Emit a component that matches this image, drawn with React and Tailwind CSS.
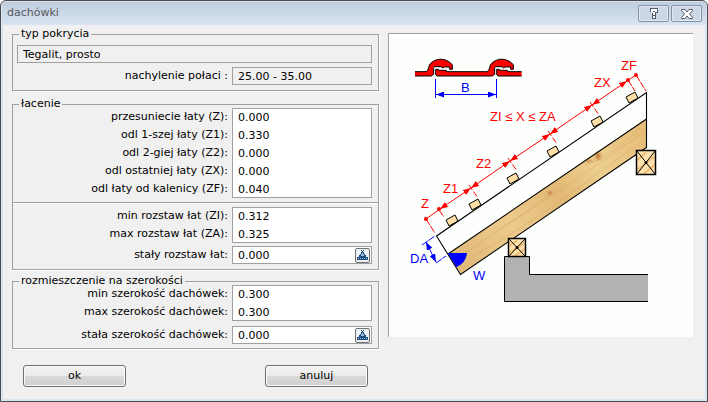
import React, { useState } from 'react';

const BATTENS = [
  { x: 452, y: 221 },
  { x: 475, y: 205 },
  { x: 513, y: 179 },
  { x: 553, y: 152 },
  { x: 597, y: 122 },
  { x: 632, y: 98 },
];

// Points on the red dimension line, from the eaves to the ridge
const SPANS = [
  { from: [440, 209], to: [471, 188] },
  { from: [471, 188], to: [510, 161] },
  { from: [510, 161], to: [550, 134] },
  { from: [550, 134], to: [592, 105] },
  { from: [592, 105], to: [627, 81] },
];

const CalcIcon = () => (
  <svg width="11" height="11" viewBox="0 0 11 11" fill="none" stroke="#1f4f80" shapeRendering="crispEdges">
    <path stroke="#9dbad6" d="M5 3.5h1M4 4.5h3M4 5.5h3M3 6.5h5M1 8.5h9" />
    <path d="M4 .5h1M6 .5h1M5 1.5h1M4 2.5h3M4 3.5h1M6 3.5h1M3 4.5h1M7 4.5h1M2 5.5h2M7 5.5h2M2 6.5h7M0 7.5h11M0 8.5h1M2 8.5h1M4 8.5h1M6 8.5h1M8 8.5h1M10 8.5h1M0 9.5h11" />
  </svg>
);

const Post = ({ x, y, w, h }) => (
  <g stroke="#000">
    <rect x={x} y={y} width={w} height={h} fill="#ffe2ad" />
    <path
      d={`M${x + 1} ${y + h * 0.4}L${x + w * 0.5} ${y + 2}M${x + 1} ${y + h * 0.8}L${x + w - 1} ${y + h * 0.25}M${x + w * 0.4} ${y + h - 1}L${x + w - 1} ${y + h * 0.6}`}
      stroke="#efbd72"
      strokeWidth="2"
    />
    <path d={`M${x} ${y}l${w} ${h}M${x + w} ${y}l${-w} ${h}`} />
    <circle cx={x + w / 2} cy={y + h / 2} r="1" />
    <rect x={x} y={y} width={w} height={h} fill="none" strokeWidth="1.5" />
  </g>
);

const TileProfile = () => (
  <g transform="translate(400 30) scale(.3333)" fill="#f00" stroke="#000" strokeWidth="3" strokeLinejoin="round">
    <path stroke="none" d="M45 125H78C88 122 84 106 92 100C110 83 138 83 157 104V118H149V111H132L128 114L123 110H101V133L94 138H45Z" />
    <path fill="none" d="M45 125H78C88 122 84 106 92 100C110 83 138 83 157 104V118H149V111H132L128 114L123 110H104Q101 110 101 116V133L94 138H45" />
    <path d="M107 118H115V121H139V125H261C271 122 267 106 275 100C293 83 321 83 340 104V118H332V111H315L311 114L306 110H287Q284 110 284 116V133L277 138H111L107 134Z" />
    <path stroke="none" d="M290 118H298V121H322V125H365V138H294L290 134Z" />
    <path fill="none" d="M365 125H322V121H298V118H290V134L294 138H365" />
  </g>
);

const RoofDrawing = () => (
  <svg viewBox="389 34 304 303" className="block w-full max-w-[304px]" fontFamily="'Liberation Sans', Arial, sans-serif" fontSize="13">
    <defs>
      <linearGradient id="wood" gradientUnits="userSpaceOnUse" x1="455" y1="265" x2="646" y2="135">
        <stop offset="0" stopColor="#e0b878" />
        <stop offset=".3" stopColor="#ecca8c" />
        <stop offset=".55" stopColor="#e2b975" />
        <stop offset=".75" stopColor="#edcf90" />
        <stop offset="1" stopColor="#e6bd79" />
      </linearGradient>
      <radialGradient id="knot">
        <stop offset="0" stopColor="#b5682a" />
        <stop offset="1" stopColor="#d79c50" stopOpacity="0" />
      </radialGradient>
      <marker id="redArrow" viewBox="0 0 8 6" refX="8" refY="3" markerWidth="8" markerHeight="6" markerUnits="userSpaceOnUse" orient="auto-start-reverse">
        <path d="M0 0L8 3L0 6Z" fill="#f00" />
      </marker>
      <marker id="blueArrow" viewBox="0 0 8 6" refX="8" refY="3" markerWidth="8" markerHeight="6" markerUnits="userSpaceOnUse" orient="auto-start-reverse">
        <path d="M0 0L8 3L0 6Z" fill="#00f" />
      </marker>
    </defs>

    <TileProfile />

    {/* tile width */}
    <g fill="none" stroke="#00f">
      <path d="M435.500 79V98M496.500 79V98" />
      <path d="M436 94.500H496" markerStart="url(#blueArrow)" markerEnd="url(#blueArrow)" />
    </g>

    {/* rafter */}
    <path d="M448 254L646 119V148L460.500 274Z" fill="url(#wood)" />
    <g fill="none" stroke="#cf9f58" strokeOpacity=".4">
      <path d="M455 260L540 203Q580 178 646 130" />
      <path d="M470 258Q530 224 570 194T644 140" />
      <path d="M500 228Q530 212 552 191" />
      <path d="M585 165Q610 158 640 128" />
    </g>
    <ellipse cx="598" cy="156" rx="5" ry="6" fill="url(#knot)" />
    <ellipse cx="589" cy="161" rx="6" ry="3" fill="url(#knot)" opacity=".6" />
    <ellipse cx="550" cy="193" rx="4" ry="4" fill="url(#knot)" opacity=".7" />
    <path d="M646.500 148V92.500L436.500 236L460.500 274.500L646.500 147.500M448 254L646.500 119" fill="none" stroke="#000" strokeWidth="1.1" />

    {BATTENS.map(({ x, y }) => (
      <path
        key={x}
        d={`M${x - 6} ${y - 1}L${x + 3} ${y - 6}L${x + 6} ${y}L${x - 3} ${y + 5}Z`}
        fill="#ffdfa5"
        stroke="#000"
      />
    ))}

    {/* wall */}
    <path d="M648 274.500H529.500V256.500H504.500V301.500H648" fill="#b2b2b2" stroke="#000" />
    <Post x={508.5} y={238.5} w={17} h={18} />
    <Post x={636.5} y={150.5} w={19} h={24} />

    {/* batten spacing */}
    <g fill="none" stroke="#f00">
      <path d="M426 219L440 209M627 81L636 75" />
      <path d="M426 219L435 233M439 210L444 217M636 75L646 91M628 80L635 91" strokeDasharray="7 1" />
      {SPANS.map(({ from, to }) => (
        <path
          key={from[0]}
          d={`M${from[0]} ${from[1]}L${to[0]} ${to[1]}`}
          markerStart="url(#redArrow)"
          markerEnd="url(#redArrow)"
        />
      ))}
      {SPANS.slice(1).map(({ from }) => (
        <path key={from[0]} d={`M${from[0] - 2} ${from[1] - 3}l9 13`} strokeDasharray="6 2" />
      ))}
    </g>
    <g fill="#f00">
      <circle cx="426" cy="219" r="2" />
      <circle cx="439" cy="209" r="2" />
      <circle cx="628" cy="80" r="2" />
      <circle cx="636" cy="75" r="2" />
      <text x="421" y="208">Z</text>
      <text x="443" y="193">Z1</text>
      <text x="476" y="168">Z2</text>
      <text x="490" y="121">ZI ≤ X ≤ ZA</text>
      <text x="594" y="87">ZX</text>
      <text x="621" y="70">ZF</text>
    </g>

    {/* eaves offset and angle */}
    <g fill="none" stroke="#00f">
      <path d="M422 245L435 236M436 263L446 256" strokeDasharray="7 1" />
      <path d="M426 242L436 262" markerStart="url(#blueArrow)" markerEnd="url(#blueArrow)" />
    </g>
    <g fill="#00f">
      <path d="M447.500 253H467Q466 263 456.500 267Z" />
      <text x="461" y="92">B</text>
      <text x="410" y="263">DA</text>
      <text x="473" y="280">W</text>
    </g>
  </svg>
);

const Group = ({ title, className, children }) => (
  <fieldset className={`min-w-0 border border-[#a0a0a0] shadow-[1px_1px_0_#fff] ${className}`}>
    <legend className="ml-1.5 h-2 px-0.5 leading-2 whitespace-nowrap">{title}</legend>
    {children}
  </fieldset>
);

// Labels on the left, one shared frame around the values on the right
const FieldRows = ({ fields, values, onChange, onCalc, readOnly }) => (
  <div className="flex gap-1 pr-1.5">
    <div className="flex min-w-0 flex-1 flex-col text-right">
      {fields.map((field) => (
        <label key={field.id} htmlFor={field.id} className="h-[18px] leading-[18px] whitespace-nowrap">
          {field.label}
        </label>
      ))}
    </div>
    <div className={`relative w-[140px] inset-ring inset-ring-[#a0a0a0] ${readOnly ? '' : 'bg-white'}`}>
      {fields.map((field) => (
        <input
          key={field.id}
          id={field.id}
          type="text"
          readOnly={readOnly}
          value={values[field.id]}
          onChange={(e) => onChange(field.id, e.target.value)}
          className="block h-[18px] w-full bg-transparent px-1.5 outline-none"
        />
      ))}
      {onCalc && (
        <button
          type="button"
          aria-label="oblicz"
          onClick={() => onCalc(fields[0].id)}
          className="absolute top-0.5 right-0.5 flex h-[15px] w-[15px] items-center justify-center rounded-xs border border-[#707070] bg-[#eef1f4]"
        >
          <CalcIcon />
        </button>
      )}
    </div>
  </div>
);

const DialogButton = ({ children, onClick }) => (
  <button
    type="button"
    onClick={onClick}
    className="h-[22px] w-[103px] rounded-[3px] border border-[#707070] bg-[linear-gradient(#f2f2f2,#ebebeb_50%,#dadada_50%,#cfcfcf)] inset-ring inset-ring-[#fafafa]"
  >
    {children}
  </button>
);

const App = () => {
  const [values, setValues] = useState({
    type: 'Tegalit, prosto',
    slope: '25.00 - 35.00',
    z: '0.000',
    z1: '0.330',
    z2: '0.000',
    zx: '0.000',
    zf: '0.040',
    zi: '0.312',
    za: '0.325',
    fixedSpacing: '0.000',
    minWidth: '0.300',
    maxWidth: '0.300',
    fixedWidth: '0.000',
  });

  const handleChange = (id, value) => {
    setValues((prev) => ({ ...prev, [id]: value }));
  };

  const handleCalc = (id) => {
    handleChange(id, '0.000');
  };

  return (
    <div className="bg-white">
      <div className="flex min-h-screen flex-col rounded-t-md border border-[#4a4a4f] bg-[#d9e4f1] p-px font-['DejaVu_Sans',Verdana,sans-serif] text-[11px] text-black">
        <header className="flex h-[23px] items-center justify-between rounded-t bg-linear-to-b from-[#bfcddd] to-[#d8e4f1] pr-1 pl-[5px]">
          <h1 className="text-[#55585c]">dachówki</h1>
          <div className="flex gap-0.5">
            <button type="button" aria-label="pomoc" className="flex h-[17px] w-[31px] items-center justify-center rounded-xs border border-[#8592a8] bg-[#cbd7e5] inset-ring inset-ring-[#dfe8f2]">
              <svg width="10" height="13" viewBox="0 0 10 13" fill="none" shapeRendering="crispEdges">
                <path d="M1 1H9V6H7V12H3V6H5V5H1Z" fill="#545a68" />
                <path d="M2 2H8V5H6V8H4V5H6V4H4V5H2ZM4 9H6V11H4Z" fill="#fff" />
                <path d="M4 4H6V5H4Z" fill="#545a68" />
              </svg>
            </button>
            <button type="button" aria-label="zamknij" className="flex h-[17px] w-[31px] items-center justify-center rounded-xs border border-[#8592a8] bg-[#cbd7e5] inset-ring inset-ring-[#dfe8f2]">
              <svg width="12" height="10" viewBox="0 0 12 10" fill="#fff" stroke="#545a68" strokeLinejoin="round">
                <path d="M.500 .500H4L6 3L8 .500H11.500V1.500L8.500 5L11.500 8.500V9.500H8L6 7L4 9.500H.500V8.500L3.500 5L.500 1.500Z" />
              </svg>
            </button>
          </div>
        </header>

        <main className="mx-px mb-px flex flex-1 items-start gap-[9px] bg-[#f0f0f0] pr-3 pl-[9px]">
          <form className="w-[367px] shrink-0 pt-[5px]" onSubmit={(e) => e.preventDefault()}>
            <Group title="typ pokrycia" className="pt-[7px] pb-[5px]">
              <div className="mb-1 pr-1.5 pl-1">
                <input
                  type="text"
                  aria-label="typ pokrycia"
                  readOnly
                  value={values.type}
                  className="block h-[18px] w-full border border-[#a0a0a0] px-[5px] outline-none"
                />
              </div>
              <FieldRows
                readOnly
                fields={[{ id: 'slope', label: 'nachylenie połaci :' }]}
                values={values}
                onChange={handleChange}
              />
            </Group>

            <Group title="łacenie" className="mt-[9px] pb-[5px]">
              <FieldRows
                fields={[
                  { id: 'z', label: 'przesuniecie łaty (Z):' },
                  { id: 'z1', label: 'odl 1-szej łaty (Z1):' },
                  { id: 'z2', label: 'odl 2-giej łaty (Z2):' },
                  { id: 'zx', label: 'odl ostatniej łaty (ZX):' },
                  { id: 'zf', label: 'odl łaty od kalenicy (ZF):' },
                ]}
                values={values}
                onChange={handleChange}
              />
              <hr className="my-1 border-[#a0a0a0] shadow-[0_1px_0_#fff]" />
              <FieldRows
                fields={[
                  { id: 'zi', label: 'min rozstaw łat (ZI):' },
                  { id: 'za', label: 'max rozstaw łat (ZA):' },
                ]}
                values={values}
                onChange={handleChange}
              />
              <div className="mt-[3px]">
                <FieldRows
                  fields={[{ id: 'fixedSpacing', label: 'stały rozstaw łat:' }]}
                  values={values}
                  onChange={handleChange}
                  onCalc={handleCalc}
                />
              </div>
            </Group>

            <Group title="rozmieszczenie na szerokości" className="mt-[7px] pb-1">
              <FieldRows
                fields={[
                  { id: 'minWidth', label: 'min szerokość dachówek:' },
                  { id: 'maxWidth', label: 'max szerokość dachówek:' },
                ]}
                values={values}
                onChange={handleChange}
              />
              <div className="mt-[5px]">
                <FieldRows
                  fields={[{ id: 'fixedWidth', label: 'stała szerokość dachówek:' }]}
                  values={values}
                  onChange={handleChange}
                  onCalc={handleCalc}
                />
              </div>
            </Group>

            <div className="mt-4 flex justify-between pr-[11px] pb-3 pl-[11px]">
              <DialogButton>ok</DialogButton>
              <DialogButton>anuluj</DialogButton>
            </div>
          </form>

          <div className="mt-2 min-w-0 flex-1 border-t border-l border-[#a0a0a0] bg-[#fdfffc]">
            <RoofDrawing />
          </div>
        </main>
      </div>
    </div>
  );
};

export default App;
